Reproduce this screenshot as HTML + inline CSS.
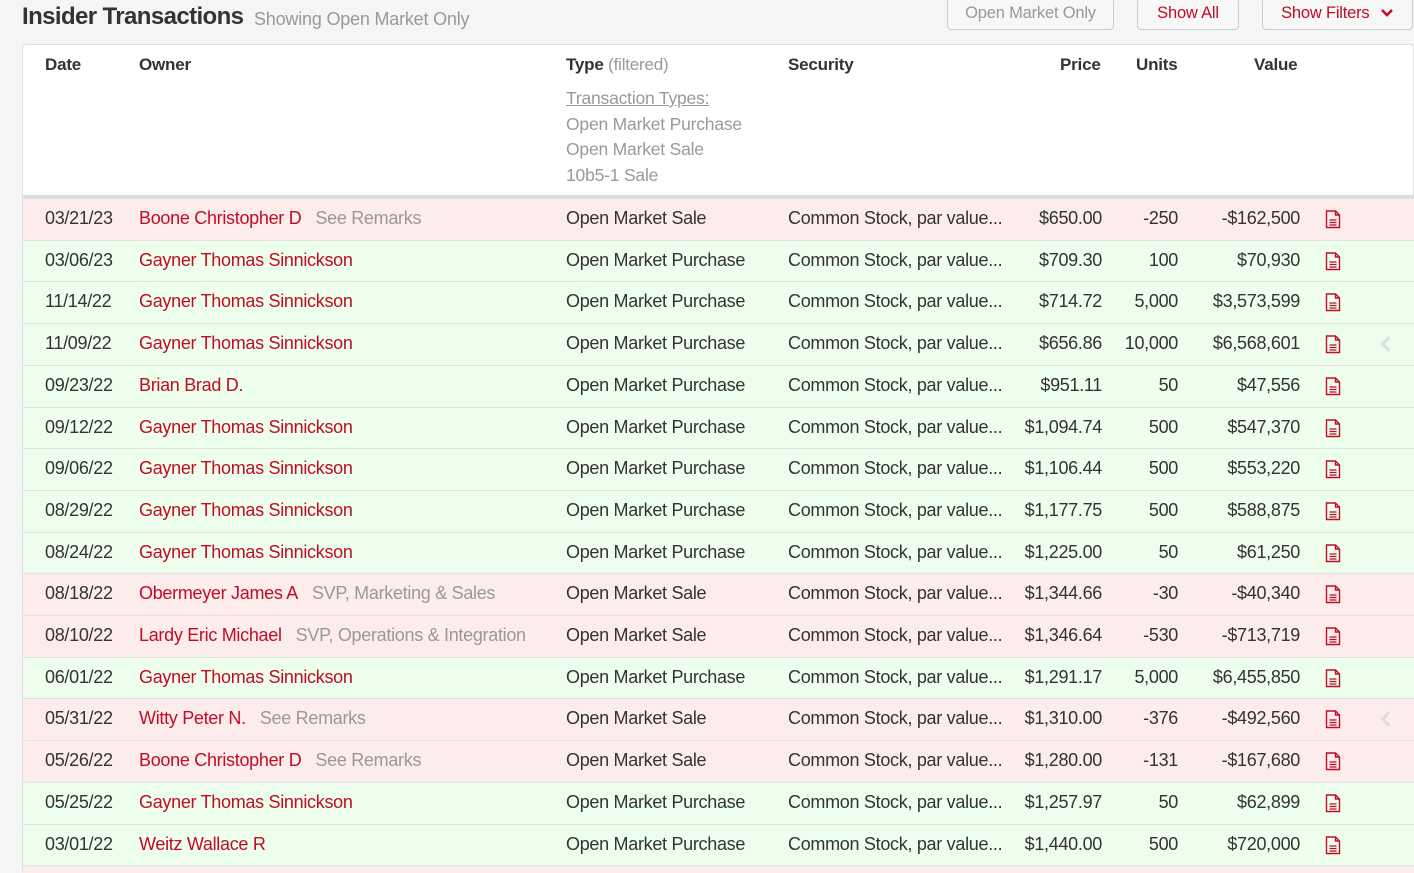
<!DOCTYPE html>
<html style="overflow:hidden;height:873px"><head><style>
*{margin:0;padding:0;box-sizing:border-box}
body{width:1414px;height:873px;overflow:hidden;background:#f5f5f5;font-family:"Liberation Sans",sans-serif;font-size:17px;color:#333;position:relative;letter-spacing:-0.2px}
.t{position:absolute;white-space:nowrap}
h1{position:absolute;left:22px;top:3px;font-size:24px;font-weight:bold;color:#333;letter-spacing:-0.6px}
.sub{position:absolute;left:254px;top:9px;font-size:18px;color:#999}
.btn{position:absolute;top:-2px;height:32px;border:1px solid #ccc;border-radius:4px;background:#f7f7f7;font-size:16.5px;text-align:center;line-height:28px}
.card{position:absolute;left:22px;top:44px;width:1392px;height:829px;background:#fff;border:1px solid #e0e0e0;border-radius:4px}
.hd{font-weight:bold;top:55px}
.g{color:#999}
.row{position:absolute;left:23px;width:1391px;height:42px;border-top:1px solid #e2e2e2;font-size:18px;letter-spacing:-0.3px}
.row span{position:absolute;top:9px;white-space:nowrap}
.p{background:#fdecec}.n{background:#eefeec}
.r{color:#c00d26}
.ra{text-align:right}
</style></head><body>
<h1>Insider Transactions</h1><div class="sub">Showing Open Market Only</div>
<div class="btn" style="left:947px;width:167px;color:#999">Open Market Only</div>
<div class="btn" style="left:1137px;width:102px;color:#c00d26">Show All</div>
<div class="btn" style="left:1262px;width:151px;color:#c00d26">Show Filters <svg width="14" height="10" viewBox="0 0 14 10" style="margin-left:6px"><path d="M2 2l5 5 5-5" stroke="#c00d26" stroke-width="2.6" fill="none"/></svg></div>
<div class="card"></div>
<div class="t hd" style="left:45px">Date</div>
<div class="t hd" style="left:139px">Owner</div>
<div class="t hd" style="left:566px">Type <span class="g" style="font-weight:normal">(filtered)</span></div>
<div class="t hd" style="left:788px">Security</div>
<div class="t hd" style="left:1060px">Price</div>
<div class="t hd" style="left:1136px">Units</div>
<div class="t hd" style="left:1254px">Value</div>
<div class="t g" style="left:566px;top:88px;text-decoration:underline;font-size:17.5px">Transaction Types:</div>
<div class="t g" style="left:566px;top:114px;font-size:17.5px">Open Market Purchase</div>
<div class="t g" style="left:566px;top:139px;font-size:17.5px">Open Market Sale</div>
<div class="t g" style="left:566px;top:165px;font-size:17.5px">10b5-1 Sale</div>
<div style="position:absolute;left:23px;top:195px;width:1391px;height:3px;background:#ddd"></div>
<div id="rows"></div>
<script>
var d=[
["p","03/21/23","Boone Christopher D","See Remarks","Open Market Sale","$650.00","-250","-$162,500",0],
["n","03/06/23","Gayner Thomas Sinnickson","","Open Market Purchase","$709.30","100","$70,930",0],
["n","11/14/22","Gayner Thomas Sinnickson","","Open Market Purchase","$714.72","5,000","$3,573,599",0],
["n","11/09/22","Gayner Thomas Sinnickson","","Open Market Purchase","$656.86","10,000","$6,568,601",1],
["n","09/23/22","Brian Brad D.","","Open Market Purchase","$951.11","50","$47,556",0],
["n","09/12/22","Gayner Thomas Sinnickson","","Open Market Purchase","$1,094.74","500","$547,370",0],
["n","09/06/22","Gayner Thomas Sinnickson","","Open Market Purchase","$1,106.44","500","$553,220",0],
["n","08/29/22","Gayner Thomas Sinnickson","","Open Market Purchase","$1,177.75","500","$588,875",0],
["n","08/24/22","Gayner Thomas Sinnickson","","Open Market Purchase","$1,225.00","50","$61,250",0],
["p","08/18/22","Obermeyer James A","SVP, Marketing &amp; Sales","Open Market Sale","$1,344.66","-30","-$40,340",0],
["p","08/10/22","Lardy Eric Michael","SVP, Operations &amp; Integration","Open Market Sale","$1,346.64","-530","-$713,719",0],
["n","06/01/22","Gayner Thomas Sinnickson","","Open Market Purchase","$1,291.17","5,000","$6,455,850",0],
["p","05/31/22","Witty Peter N.","See Remarks","Open Market Sale","$1,310.00","-376","-$492,560",1],
["p","05/26/22","Boone Christopher D","See Remarks","Open Market Sale","$1,280.00","-131","-$167,680",0],
["n","05/25/22","Gayner Thomas Sinnickson","","Open Market Purchase","$1,257.97","50","$62,899",0],
["n","03/01/22","Weitz Wallace R","","Open Market Purchase","$1,440.00","500","$720,000",0],
["p","","","","","","","",0]];
var h="",ic='<svg width="16" height="19" viewBox="0 0 16 19"><path d="M1.5 1h9l4 4v12.5h-13z M10.5 1v4h4" stroke="#c00d26" stroke-width="1.4" fill="none"/><path d="M4.5 10h7M4.5 12.5h7M4.5 15h7" stroke="#c00d26" stroke-width="1.2"/></svg>';
d.forEach(function(r,i){var y=198+i*41.7;
h+='<div class="row '+r[0]+'" style="top:'+y+'px'+(r[1]?'':';height:8px')+'">'+(r[1]?'<span style="left:22px">'+r[1]+'</span><span style="left:116px"><b class="r" style="font-weight:normal">'+r[2]+'</b>'+(r[3]?'<span class="g" style="position:static;margin-left:14px">'+r[3]+'</span>':'')+'</span><span style="left:543px">'+r[4]+'</span><span style="left:765px">Common Stock, par value...</span><span class="ra" style="right:312px">'+r[5]+'</span><span class="ra" style="right:236px">'+r[6]+'</span><span class="ra" style="right:114px">'+r[7]+'</span><span style="left:1302px;top:11px">'+ic+'</span>'+(r[8]?'<span style="left:1357px;top:11px"><svg width="12" height="18" viewBox="0 0 12 18"><path d="M9 2L3 9l6 7" stroke="#ddd" stroke-width="3" fill="none"/></svg></span>':''):'')+'</div>';});
document.getElementById("rows").innerHTML=h;
</script>
</body></html>
